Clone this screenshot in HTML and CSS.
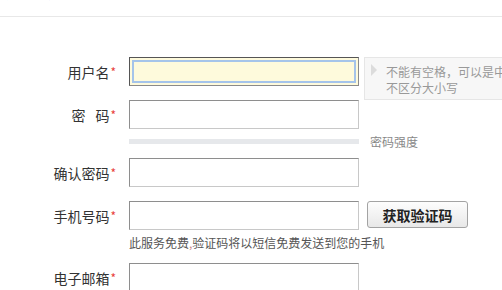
FILE: index.html
```html
<!DOCTYPE html>
<html lang="zh-CN">
<head>
<meta charset="utf-8">
<title>注册</title>
<link rel="stylesheet" href="styles.css">
</head>
<body>
<div class="top"><span class="title">用户注册</span></div>
<form class="form">
  <div class="row">
    <label class="label">用户名<span class="req">*</span></label>
    <input class="input focus" type="text">
    <div class="tip"><span class="arrow"></span><span class="line1">不能有空格，可以是中文、英文、数字或下划线</span><br>不区分大小写</div>
  </div>
  <div class="row gap">
    <label class="label">密<span class="sp"></span>码<span class="req">*</span></label>
    <input class="input" type="password">
  </div>
  <div class="strength">
    <div class="bar"></div>
    <span class="stext">密码强度</span>
  </div>
  <div class="row gap">
    <label class="label">确认密码<span class="req">*</span></label>
    <input class="input" type="password">
  </div>
  <div class="row gap top-align">
    <label class="label">手机号码<span class="req">*</span></label>
    <input class="input" type="text">
    <button class="btn" type="button">获取验证码</button>
  </div>
  <div class="hint">此服务免费<span class="comma">,</span>验证码将以短信免费发送到您的手机</div>
  <div class="row email">
    <label class="label">电子邮箱<span class="req">*</span></label>
    <input class="input" type="text">
  </div>
</form>
</body>
</html>
```
FILE: styles.css
```css
html, body {
  margin: 0;
  padding: 0;
  overflow: hidden;
  background: #fff;
  font-family: "Noto Sans CJK SC", "Noto Sans", sans-serif;
}

.top {
  height: 16px;
  border-bottom: 1px solid #e8e8e8;
  overflow: hidden;
}

.title {
  display: block;
  margin: -16px 0 0 6px;
  font-size: 14px;
  line-height: 16px;
  color: #6a5a8a;
}

.form {
  padding-top: 40px;
}

.row {
  position: relative;
  display: flex;
  align-items: center;
  height: 29px;
}

.row.gap {
  margin-top: 14px;
}

.row.top-align {
  align-items: flex-start;
}

.row.top-align .label {
  line-height: 29px;
}

.row.email {
  margin-top: 11px;
}

.label {
  width: 116px;
  margin-right: 13px;
  text-align: right;
  font-size: 14px;
  color: #333;
  white-space: nowrap;
}

.sp {
  display: inline-block;
  width: 10px;
}

.req {
  color: #e8413c;
  font-size: 12px;
  vertical-align: 1px;
  margin-left: 1px;
}

.input {
  box-sizing: border-box;
  width: 230px;
  height: 29px;
  margin: 0;
  padding: 0 6px;
  border: 1px solid;
  border-color: #8e8e8e #c8c8c8 #c8c8c8 #8e8e8e;
  background: #fff;
  font-size: 14px;
  outline: none;
}

.input.focus {
  border-color: #555 #8a8a8a #8a8a8a #555;
  background: #fefadc;
  outline: 2px solid #a5c4ea;
  outline-offset: -5px;
  border-radius: 0;
}

.tip {
  position: absolute;
  left: 364px;
  top: 0;
  box-sizing: border-box;
  width: 138px;
  height: 43px;
  padding: 6px 0 0 21px;
  border: 1px solid #e6e6e6;
  border-right: 0;
  background: #f7f7f7;
  font-size: 12px;
  line-height: 16px;
  color: #999;
  white-space: nowrap;
  overflow: hidden;
}

.arrow {
  position: absolute;
  left: 6px;
  top: 6px;
  width: 0;
  height: 0;
  border-left: 6px solid #dcdcdc;
  border-top: 6px solid transparent;
  border-bottom: 6px solid transparent;
}

.strength {
  display: flex;
  align-items: center;
  height: 5px;
  margin-top: 10px;
  padding-left: 129px;
}

.bar {
  width: 230px;
  height: 5px;
  background: #e6e8eb;
}

.stext {
  margin-left: 11px;
  font-size: 12px;
  color: #888;
  white-space: nowrap;
}

.btn {
  box-sizing: border-box;
  width: 101px;
  height: 27px;
  margin: 0 0 0 8px;
  padding: 0;
  border: 1px solid #a3a3a3;
  border-radius: 3px;
  background: linear-gradient(#fdfdfd, #e8e8e8);
  font-family: "Noto Sans CJK SC", sans-serif;
  font-size: 14px;
  font-weight: bold;
  color: #222;
}

.hint {
  margin-top: 4px;
  padding-left: 129px;
  font-size: 12px;
  line-height: 18px;
  color: #555;
  white-space: nowrap;
}

.comma {
  color: #c88;
}
```
